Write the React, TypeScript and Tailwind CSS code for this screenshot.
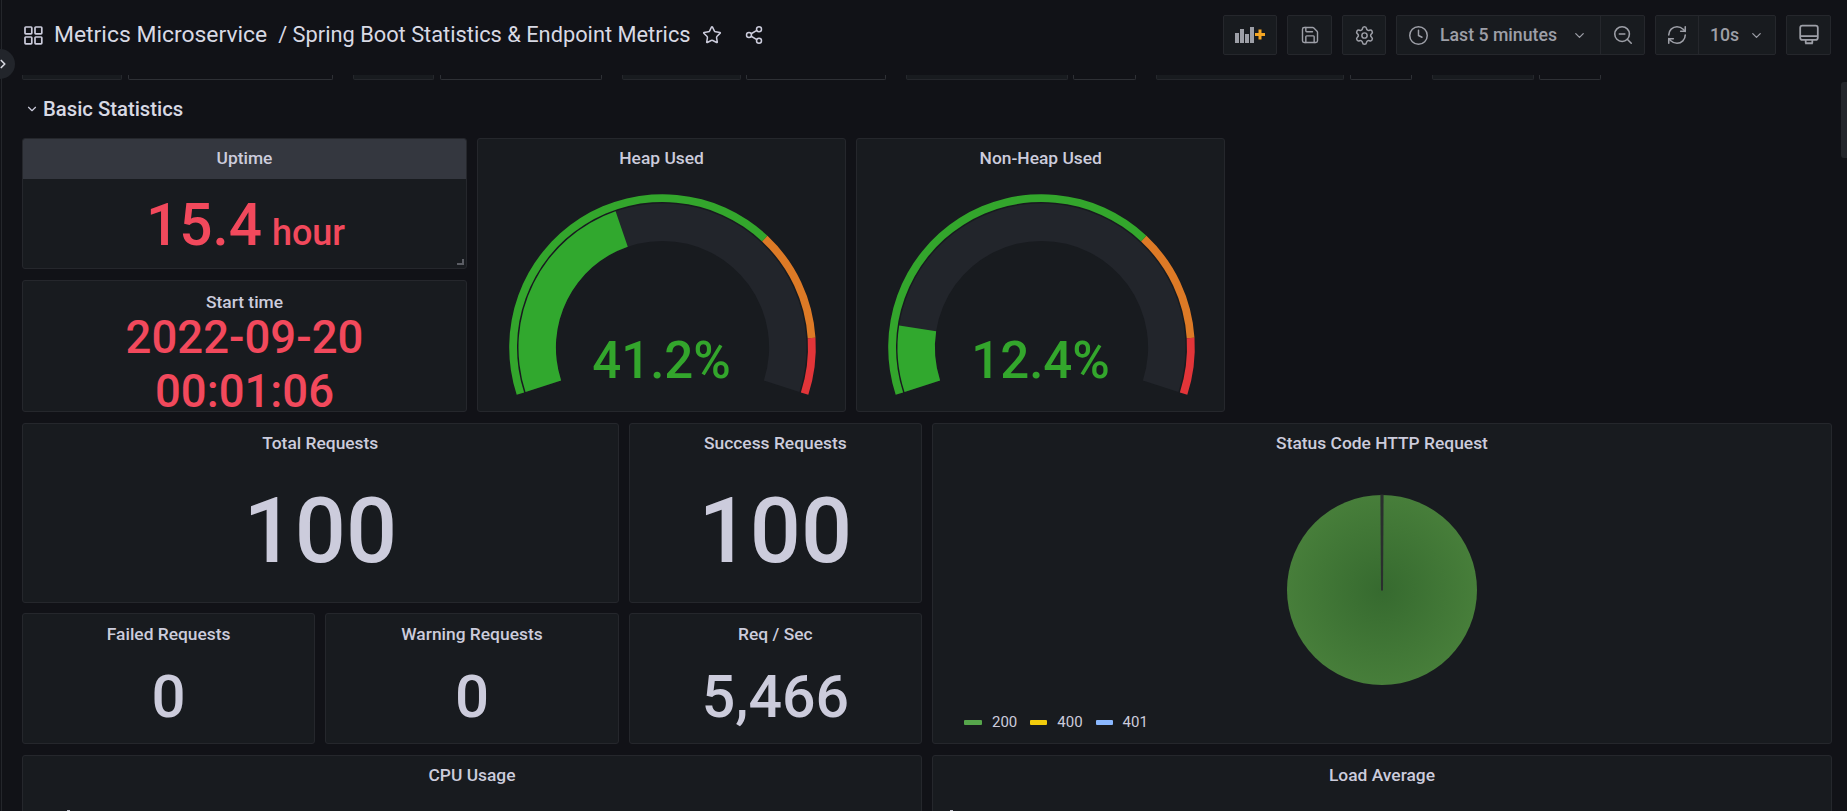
import React from "react";
import { Star, Share2, Save, Settings, Clock, ChevronDown, ChevronRight, ZoomOut, RefreshCw } from "lucide-react";

function pt(cx: number, cy: number, r: number, f: number) {
  const a = ((162 + 216 * f) * Math.PI) / 180;
  return [cx + r * Math.cos(a), cy + r * Math.sin(a)];
}
function seg(cx: number, cy: number, r0: number, r1: number, f0: number, f1: number) {
  const [a, b] = pt(cx, cy, r1, f0);
  const [c, d] = pt(cx, cy, r1, f1);
  const [e, g] = pt(cx, cy, r0, f1);
  const [h, i] = pt(cx, cy, r0, f0);
  const large = (f1 - f0) * 216 > 180 ? 1 : 0;
  return `M${a} ${b}A${r1} ${r1} 0 ${large} 1 ${c} ${d}L${e} ${g}A${r0} ${r0} 0 ${large} 0 ${h} ${i}Z`;
}

function Panel({ title, className, titleClass, children }: { title: string; className: string; titleClass?: string; children?: React.ReactNode }) {
  return (
    <div className={`relative flex flex-col rounded-[3px] border border-[#25272c] bg-[#181b1f] ${className}`}>
      <div className={titleClass ?? "flex h-[40px] shrink-0 items-center justify-center text-[17.4px] font-medium text-[#ccccdc]"}>{title}</div>
      {children}
    </div>
  );
}

function Gauge({ title, value, frac, cls }: { title: string; value: string; frac: number; cls: string }) {
  const cx = 184.5;
  const cy = 168.5;
  return (
    <Panel title={title} className={cls}>
      <svg width="367" height="232" viewBox="0 0 367 232" className="block">
        <path d={seg(cx, cy, 106.6, 144, 0, 1)} fill="#22252b" />
        <path d={seg(cx, cy, 106.6, 144, 0, frac)} fill="#31a82e" />
        <path d={seg(cx, cy, 145.5, 153.3, 0, 0.7)} fill="#33a62c" />
        <path d={seg(cx, cy, 145.5, 153.3, 0.7, 0.9)} fill="#dd7a26" />
        <path d={seg(cx, cy, 145.5, 153.3, 0.9, 1)} fill="#e23539" />
        <text x={cx - 1} y={198.5} textAnchor="middle" fontSize="51" fontWeight="500" fill="#33a62c" fontFamily="Roboto, sans-serif">
          {value}
        </text>
      </svg>
    </Panel>
  );
}

function Stat({ title, value, cls, valueCls }: { title: string; value: string; cls: string; valueCls: string }) {
  return (
    <Panel title={title} className={cls}>
      <div className={`flex flex-1 items-center justify-center font-medium leading-none text-[#ccccdc] ${valueCls}`}>{value}</div>
    </Panel>
  );
}

function VarBox({ w, filled }: { w: string; filled?: boolean }) {
  return <div className={`h-[5px] rounded-b-[2px] border-x border-b ${w} ${filled ? "border-[#25272c] bg-[#181b1f]" : "border-[#2e3035]"}`} />;
}

function Btn({ w, children }: { w: string; children: React.ReactNode }) {
  return <div className={`flex h-[40px] items-center justify-center rounded-[2px] border border-[#25272c] bg-[#181b1f] ${w}`}>{children}</div>;
}

export default function App() {
  const ic = "text-[#9d9fa7]";
  return (
    <div className="relative h-[811px] w-full overflow-hidden bg-[#111217] font-['Roboto',sans-serif]">
      <div className="absolute bottom-0 left-[1px] top-0 w-px bg-[#24262b]" />
      <div className="absolute left-[-15px] top-[49px] flex h-[30px] w-[30px] items-center justify-end rounded-full bg-[#22252b] pr-[9px]">
        <ChevronRight size={14} strokeWidth={3} className="translate-x-[4px] text-[#d5d6de]" />
      </div>
      <div className="absolute right-0 top-[82px] h-[76px] w-[6px] rounded-l-[3px] bg-[#24262b]" />

      <header className="flex h-[70px] items-center pl-[24px] pr-[16px]">
        <svg width="19" height="19" viewBox="0 0 19 19" fill="none" stroke="#ccccdc" strokeWidth="1.7">
          <rect x="1" y="1" width="6.8" height="6.8" rx="0.8" />
          <rect x="11" y="1" width="6.8" height="6.8" rx="0.8" />
          <rect x="1" y="11" width="6.8" height="6.8" rx="0.8" />
          <rect x="11" y="11" width="6.8" height="6.8" rx="0.8" />
        </svg>
        <span className="ml-[11px] text-[22.9px] text-[#d8d9e4]">Metrics Microservice</span>
        <span className="ml-[11px] text-[21.8px] text-[#d8d9e4]">/ Spring Boot Statistics &amp; Endpoint Metrics</span>
        <Star size={20} strokeWidth={1.8} className="ml-[11px] text-[#ccccdc]" />
        <Share2 size={20} strokeWidth={1.8} className="ml-[22px] text-[#ccccdc]" />
        <div className="ml-auto flex items-center gap-[10px]">
          <Btn w="w-[54px]">
            <svg width="30" height="20" viewBox="0 0 30 20">
              <g fill="#9d9fa7">
                <rect x="0" y="8" width="4" height="10" />
                <rect x="5" y="4" width="4" height="14" />
                <rect x="10" y="9" width="4" height="9" />
                <rect x="15" y="2" width="4" height="16" />
              </g>
              <path d="M23.5 4.5h3v3.5h3.5v3h-3.5v3.5h-3V11H20V8h3.5z" fill="#f5a623" />
            </svg>
          </Btn>
          <Btn w="w-[45px]"><Save size={20} strokeWidth={1.7} className={ic} /></Btn>
          <Btn w="w-[44px]"><Settings size={21} strokeWidth={1.7} className={ic} /></Btn>
          <div className="flex h-[40px] w-[249px] items-center rounded-[2px] border border-[#25272c] bg-[#181b1f] text-[17.7px] font-medium text-[#9d9fa7]">
            <div className="flex h-full w-[204px] items-center border-r border-[#25272c] pl-[11px]">
              <Clock size={21} strokeWidth={1.7} />
              <span className="ml-[11px]">Last 5 minutes</span>
              <ChevronDown size={15} strokeWidth={2} className="ml-[15px]" />
            </div>
            <div className="flex flex-1 items-center justify-center"><ZoomOut size={22} strokeWidth={1.7} /></div>
          </div>
          <div className="flex h-[40px] w-[121px] items-center rounded-[2px] border border-[#25272c] bg-[#181b1f] text-[17.7px] font-medium text-[#9d9fa7]">
            <div className="flex h-full w-[43px] items-center justify-center border-r border-[#25272c]"><RefreshCw size={22} strokeWidth={1.7} /></div>
            <span className="ml-[11px]">10s</span>
            <ChevronDown size={15} strokeWidth={2} className="ml-[10px]" />
          </div>
          <Btn w="w-[45px]">
            <svg width="22" height="22" viewBox="0 0 20 20" fill="none" stroke="#9d9fa7" strokeWidth="1.6">
              <rect x="2" y="1.5" width="16" height="13" rx="2" />
              <path d="M2 11h16" />
              <path d="M6.5 17.5h7M7 14.5v3M13 14.5v3" />
            </svg>
          </Btn>
        </div>
      </header>

      <div className="mt-[5px] flex gap-[20px] pl-[22px]">
        <div className="flex gap-[6px]"><VarBox w="w-[100px]" filled /><VarBox w="w-[205px]" /></div>
        <div className="flex gap-[6px]"><VarBox w="w-[81px]" filled /><VarBox w="w-[162px]" /></div>
        <div className="flex gap-[5px]"><VarBox w="w-[119px]" filled /><VarBox w="w-[140px]" /></div>
        <div className="flex gap-[5px]"><VarBox w="w-[162px]" filled /><VarBox w="w-[63px]" /></div>
        <div className="flex gap-[6px]"><VarBox w="w-[188px]" filled /><VarBox w="w-[62px]" /></div>
        <div className="flex gap-[5px]"><VarBox w="w-[102px]" filled /><VarBox w="w-[62px]" /></div>
      </div>

      <div className="flex h-[57.5px] items-center pl-[25px]">
        <ChevronDown size={14} strokeWidth={2} className="text-[#ccccdc]" />
        <span className="ml-[4px] text-[20.3px] font-medium text-[#d8d9e4]">Basic Statistics</span>
      </div>

      <div className="grid grid-cols-[repeat(24,minmax(0,1fr))] grid-rows-[131.5px_132.5px_180px_131px_120px] gap-x-[10px] gap-y-[10.5px] pl-[22px] pr-[15px]">
        <Panel
          title="Uptime"
          className="col-span-6"
          titleClass="flex h-[40px] shrink-0 items-center justify-center rounded-t-[2px] bg-[#34373f] text-[17.4px] font-medium text-[#ccccdc]"
        >
          <div className="flex flex-1 items-baseline justify-center pl-[2px] pt-[11px] font-medium leading-[70px] text-[#f2495c]">
            <span className="text-[58.5px]">15.4</span>
            <span className="ml-[10px] text-[36px]">hour</span>
          </div>
          <div className="absolute bottom-[3px] right-[2px] h-[6px] w-[7px] border-b-2 border-r-2 border-[#5b5d64]" />
        </Panel>

        <Gauge title="Heap Used" value="41.2%" frac={0.412} cls="col-span-5 row-span-2" />
        <Gauge title="Non-Heap Used" value="12.4%" frac={0.124} cls="col-span-5 row-span-2" />
        <div className="col-span-8 row-span-2" />

        <Panel
          title="Start time"
          className="col-span-6"
          titleClass="h-[30px] shrink-0 pt-[10px] text-center text-[17.4px] font-medium leading-[22px] text-[#ccccdc]"
        >
          <div className="text-center text-[45.5px] font-medium leading-[54px] text-[#f2495c]">
            <div>2022-09-20</div>
            <div>00:01:06</div>
          </div>
        </Panel>

        <Stat title="Total Requests" value="100" cls="col-span-8" valueCls="text-[90px] pb-[2px]" />
        <Stat title="Success Requests" value="100" cls="col-span-4" valueCls="text-[90px] pb-[2px]" />

        <Panel title="Status Code HTTP Request" className="col-span-12 row-span-2">
          <svg width="200" height="231" viewBox="0 0 200 231" className="mx-auto block">
            <defs>
              <radialGradient id="pieFill" cx="50%" cy="50%" r="50%">
                <stop offset="0%" stopColor="#366a2f" />
                <stop offset="100%" stopColor="#477e3a" />
              </radialGradient>
            </defs>
            <circle cx="100" cy="126" r="95" fill="url(#pieFill)" />
            <path d="M98.4 30.5h3.2L101 126.5h-2z" fill="#2a2f2e" />
          </svg>
          <div className="mt-[18px] flex h-[20px] items-center pl-[31px] text-[15px] text-[#ccccdc]">
            <span className="h-[5px] w-[18px] rounded-[1px] bg-[#56a64b]" />
            <span className="ml-[10px]">200</span>
            <span className="ml-[13px] h-[5px] w-[17px] rounded-[1px] bg-[#f2cc0c]" />
            <span className="ml-[10px]">400</span>
            <span className="ml-[13px] h-[5px] w-[17px] rounded-[1px] bg-[#8ab8ff]" />
            <span className="ml-[10px]">401</span>
          </div>
        </Panel>

        <Stat title="Failed Requests" value="0" cls="col-span-4" valueCls="text-[60px] pb-[4px]" />
        <Stat title="Warning Requests" value="0" cls="col-span-4" valueCls="text-[60px] pb-[4px]" />
        <Stat title="Req / Sec" value="5,466" cls="col-span-4" valueCls="text-[59px] pb-[4px]" />

        <Panel title="CPU Usage" className="col-span-12">
          <div className="absolute left-[44px] top-[54px] h-[3px] w-[3px] bg-[#b9bac4]" />
        </Panel>
        <Panel title="Load Average" className="col-span-12">
          <div className="absolute left-[17px] top-[54px] h-[3px] w-[3px] bg-[#b9bac4]" />
        </Panel>
      </div>
    </div>
  );
}
